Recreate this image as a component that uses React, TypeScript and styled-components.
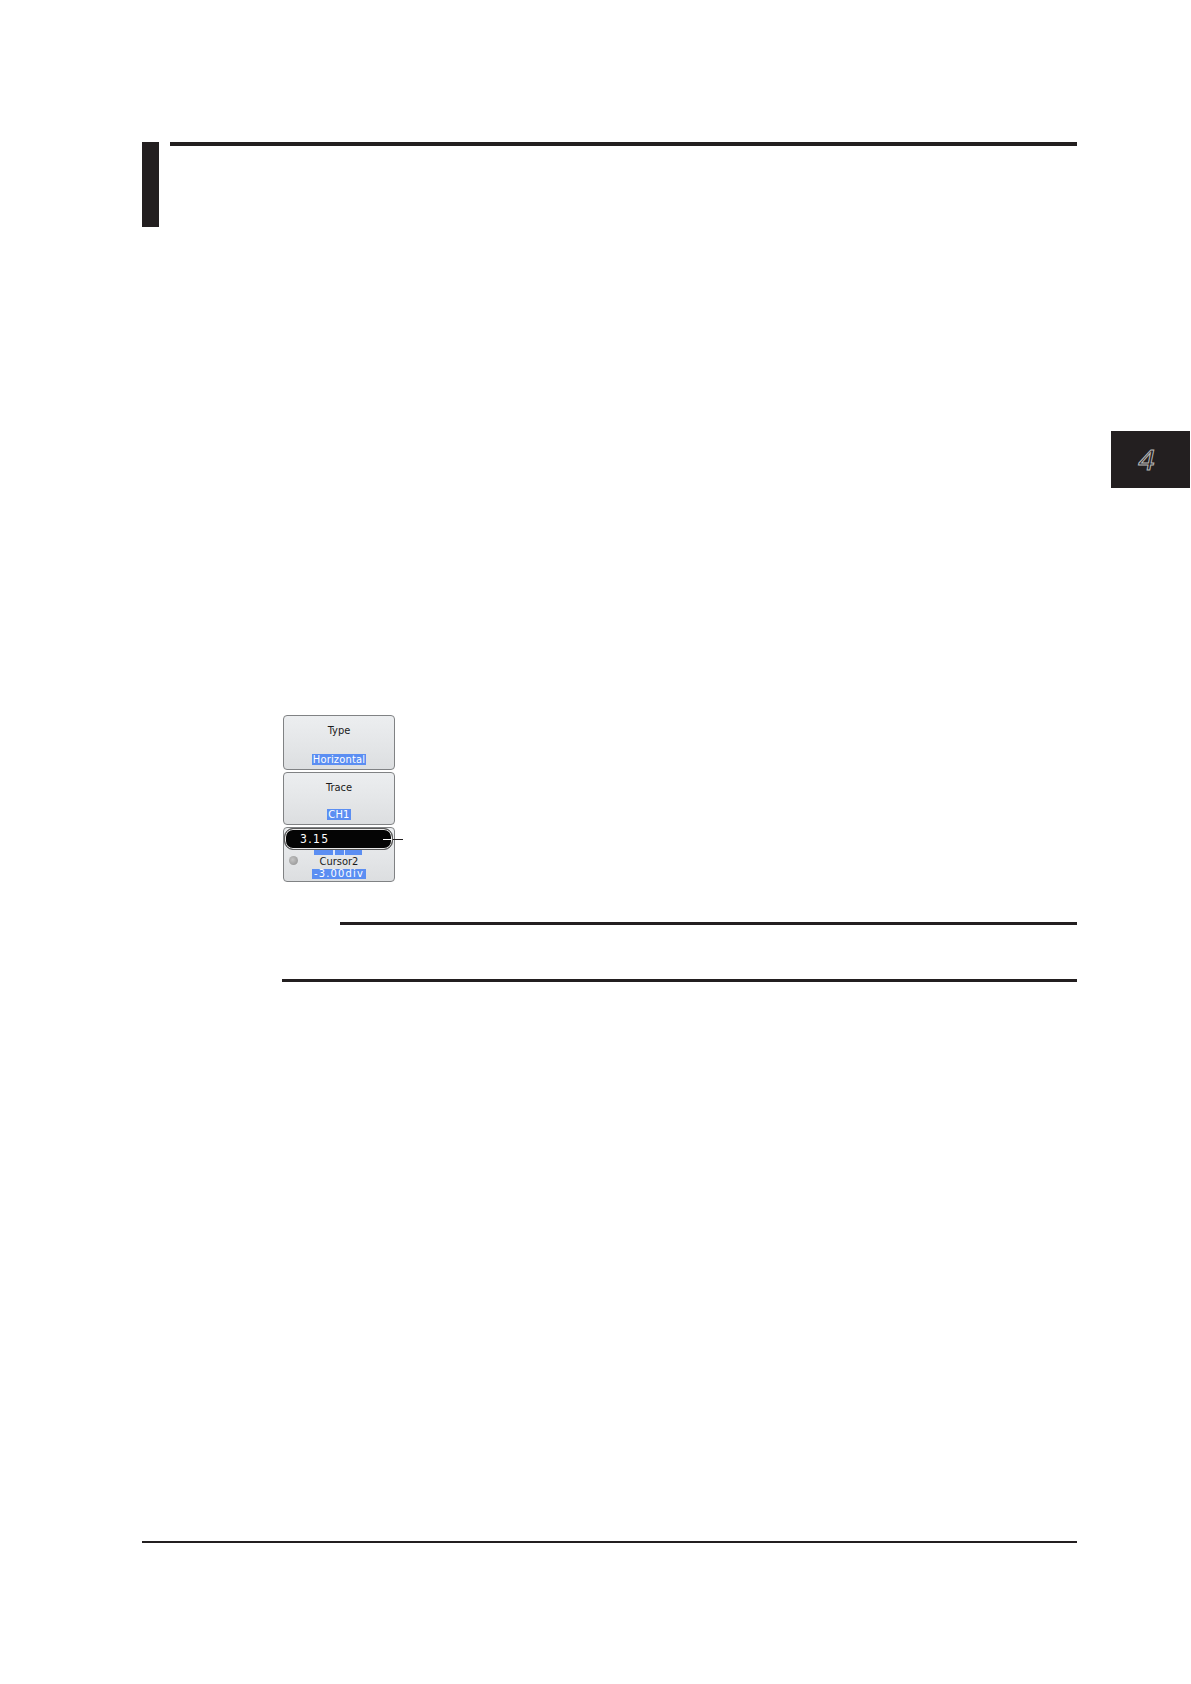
import React from 'react';
import styled, { createGlobalStyle } from 'styled-components';

const colors = {
  ink: '#231f20',
  key: '#e3e5e7',
  keyEdge: '#808284',
  select: '#5b8ef2',
  tabText: '#b9b9b9',
};

const GlobalStyle = createGlobalStyle`
  html, body {
    margin: 0;
    padding: 0;
    background: #ffffff;
  }
  body {
    font-family: 'Liberation Sans', Arial, sans-serif;
  }
`;

const Page = styled.div`
  width: 1191px;
  min-height: 1684px;
  box-sizing: border-box;
  padding: 142px 0 0 142px;
  display: flex;
  flex-direction: column;
  background: #ffffff;
`;

const Column = styled.div`
  width: 935px;
  display: flex;
  flex-direction: column;
`;

const ChapterHead = styled.header`
  display: flex;
  align-items: flex-start;
  gap: 11px;
`;

const HeadBar = styled.div`
  width: 17px;
  height: 85px;
  background: ${colors.ink};
`;

const HeadRule = styled.div`
  flex: 1;
  height: 4px;
  background: ${colors.ink};
`;

const TabRow = styled.div`
  display: flex;
  justify-content: flex-end;
  margin: 204px -113px 0 0;
`;

const ChapterTab = styled.div`
  width: 79px;
  height: 57px;
  background: ${colors.ink};
  display: flex;
  align-items: center;
  justify-content: center;
  padding-right: 8px;
  box-sizing: border-box;
  font-family: 'Liberation Sans', Arial, sans-serif;
  font-size: 30px;
  color: transparent;
  -webkit-text-stroke: 1px ${colors.tabText};
  font-style: oblique 6deg;
`;

const Figure = styled.div`
  margin: 227px 0 0 141px;
  width: 112px;
  display: flex;
  flex-direction: column;
  gap: 2px;
`;

const SoftKey = styled.div<{ $h: number }>`
  position: relative;
  height: ${p => p.$h}px;
  box-sizing: border-box;
  border: 1px solid ${colors.keyEdge};
  border-radius: 4px;
  background: linear-gradient(#eceef0, ${colors.key} 60%, #dcdee0);
  display: flex;
  flex-direction: column;
  align-items: center;
  justify-content: space-between;
  padding: 8px 0 4px;
  font-family: 'DejaVu Sans Condensed', 'Roboto Condensed', 'Liberation Sans', sans-serif;
  font-stretch: condensed;
  font-size: 11px;
  color: #1a1a1a;
`;

const KeyLabel = styled.span`
  line-height: 13px;
`;

const KeyValue = styled.span`
  background: ${colors.select};
  color: #ffffff;
  line-height: 11px;
  padding: 0 1px;
  letter-spacing: 0.2px;
`;

const CursorKey = styled(SoftKey)`
  justify-content: flex-end;
  padding: 0 0 2px;
`;

const CursorRow = styled.div`
  width: 100%;
  display: flex;
  align-items: center;
  justify-content: center;
  position: relative;
  line-height: 12px;
  margin-bottom: 1px;
`;

const Knob = styled.span`
  position: absolute;
  left: 5px;
  top: 1px;
  width: 9px;
  height: 9px;
  border-radius: 50%;
  background: radial-gradient(circle at 40% 40%, #c4c4c4, #8e8e8e);
`;

const SpacedValue = styled(KeyValue)`
  letter-spacing: 1.2px;
  padding: 0 2px;
  line-height: 10px;
`;

/* value of Cursor1, mostly hidden behind the entry field */
const Peek = styled.span`
  position: absolute;
  top: 22px;
  left: 30px;
  width: 48px;
  height: 5px;
  background:
    linear-gradient(90deg, transparent 0 40%, #dfe8fb 40% 43%, transparent 43% 62%, #dfe8fb 62% 65%, transparent 65%),
    ${colors.select};
`;

const EntryField = styled.div`
  position: absolute;
  top: 0;
  left: 0;
  width: 109px;
  height: 22px;
  box-sizing: border-box;
  border: 1px solid #5a5a5a;
  border-radius: 9px;
  background: #050505;
  box-shadow: inset 0 0 0 1px #e8e8e8;
  display: flex;
  align-items: center;
  padding-left: 15px;
  font-family: 'DejaVu Sans Condensed', 'Roboto Condensed', 'Liberation Sans', sans-serif;
  font-size: 12px;
  letter-spacing: 1.4px;
  color: #ffffff;
  z-index: 2;

  &::after {
    content: '';
    position: absolute;
    right: 0;
    top: 10px;
    width: 9px;
    height: 1px;
    background: #ffffff;
  }
`;

const Callout = styled.span`
  position: absolute;
  top: 11px;
  left: 109px;
  width: 10px;
  height: 1px;
  background: ${colors.ink};
  z-index: 3;
`;

const NoteRule = styled.div<{ $indent: number; $top: number }>`
  margin: ${p => p.$top}px 0 0 ${p => p.$indent}px;
  height: 3px;
  background: ${colors.ink};
`;

const FootRule = styled.div`
  margin-top: 559px;
  height: 2px;
  background: ${colors.ink};
`;

export default function App() {
  return (
    <>
      <GlobalStyle />
      <Page>
        <Column>
          <ChapterHead>
            <HeadBar />
            <HeadRule />
          </ChapterHead>

          <TabRow>
            <ChapterTab>4</ChapterTab>
          </TabRow>

          <Figure>
            <SoftKey $h={55}>
              <KeyLabel>Type</KeyLabel>
              <KeyValue>Horizontal</KeyValue>
            </SoftKey>
            <SoftKey $h={53}>
              <KeyLabel>Trace</KeyLabel>
              <KeyValue>CH1</KeyValue>
            </SoftKey>
            <CursorKey $h={55}>
              <Peek />
              <EntryField>3.15</EntryField>
              <Callout />
              <CursorRow>
                <Knob />
                <KeyLabel>Cursor2</KeyLabel>
              </CursorRow>
              <SpacedValue>-3.00div</SpacedValue>
            </CursorKey>
          </Figure>

          <NoteRule $indent={198} $top={40} />
          <NoteRule $indent={140} $top={54} />

          <FootRule />
        </Column>
      </Page>
    </>
  );
}
